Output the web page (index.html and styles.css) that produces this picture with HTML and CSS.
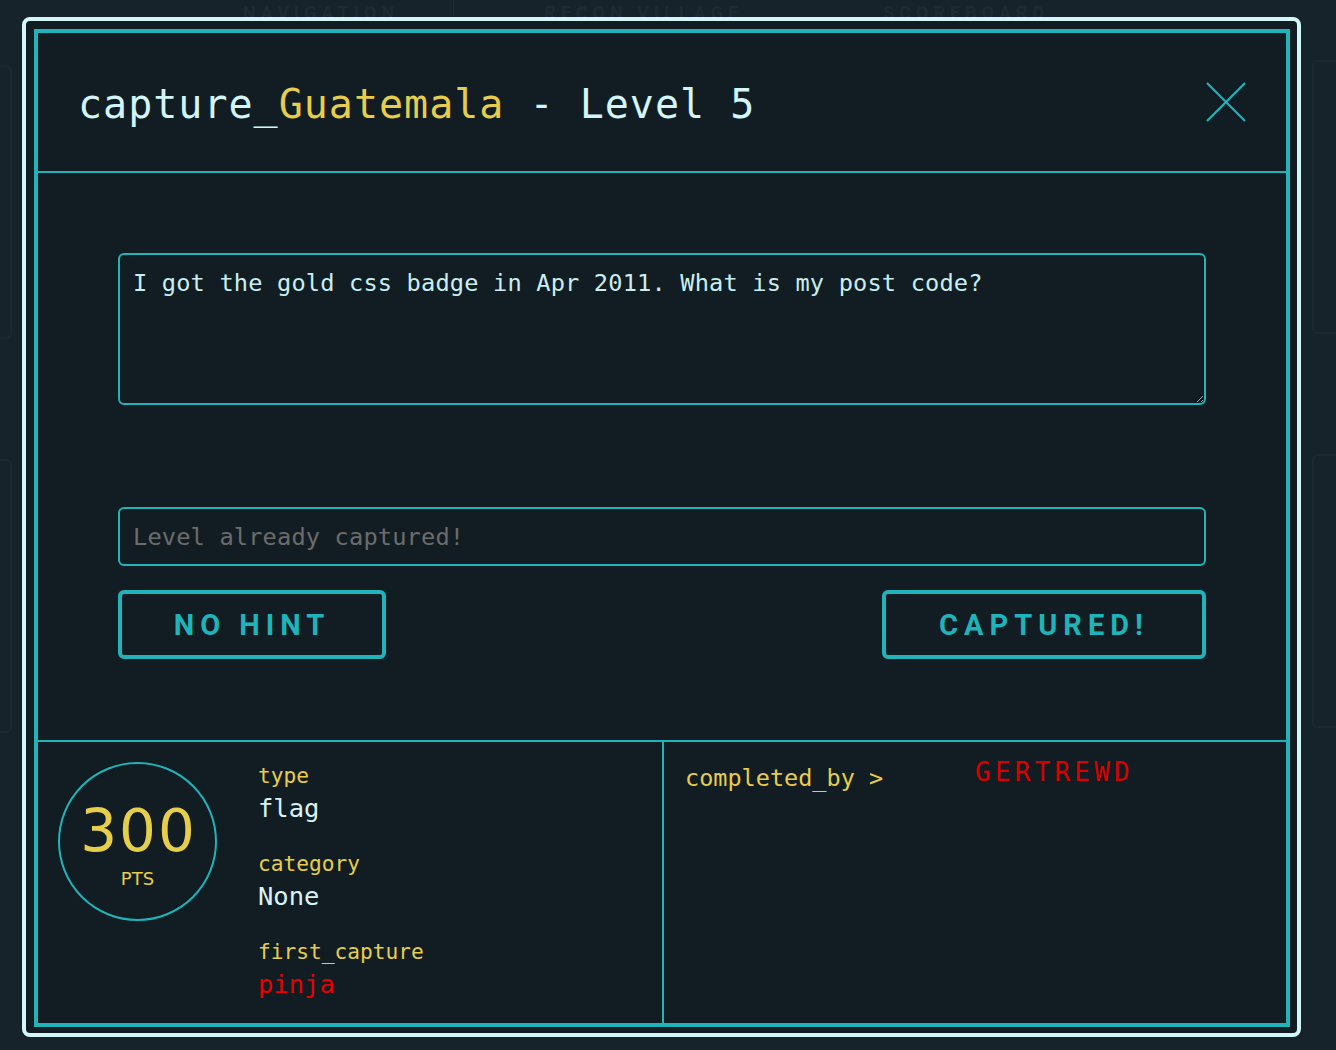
FILE: index.html
```html
<!DOCTYPE html>
<html lang="en">
<head>
<meta charset="utf-8">
<title>capture_Guatemala - Level 5</title>
<link rel="stylesheet" href="styles.css">
</head>
<body>
  <div class="backdrop">
    <nav class="topnav">
      <span class="nav-item">NAVIGATION</span>
      <span class="nav-sep"></span>
      <span class="nav-item">RECON VILLAGE</span>
      <span class="nav-item">SCOREBOARD</span>
    </nav>
    <div class="page">
      <aside class="side side-left">
        <div class="ghost ghost-a"></div>
        <div class="ghost ghost-b"></div>
      </aside>
      <main class="page-main"></main>
      <aside class="side side-right">
        <div class="ghost ghost-c"></div>
        <div class="ghost ghost-d"></div>
      </aside>
    </div>
  </div>

  <div class="modal">
    <div class="modal-inner">
      <header class="modal-header">
        <h1 class="modal-title">capture_<span class="hl">Guatemala</span> - Level 5</h1>
        <button class="close" aria-label="Close">
          <svg width="40" height="40" viewBox="0 0 40 40"><path d="M1 1 L39 39 M39 1 L1 39" stroke="#1fb3ba" stroke-width="2.2" fill="none"/></svg>
        </button>
      </header>
      <section class="modal-body">
        <textarea class="question" readonly>I got the gold css badge in Apr 2011. What is my post code?</textarea>
        <input class="answer" type="text" placeholder="Level already captured!" disabled>
        <div class="actions">
          <button class="btn">NO HINT</button>
          <button class="btn">CAPTURED!</button>
        </div>
      </section>
      <footer class="modal-footer">
        <div class="stats">
          <div class="points">
            <div class="points-num">300</div>
            <div class="points-unit">PTS</div>
          </div>
          <dl class="info">
            <dt>type</dt>
            <dd>flag</dd>
            <dt>category</dt>
            <dd>None</dd>
            <dt>first_capture</dt>
            <dd class="red">pinja</dd>
          </dl>
        </div>
        <div class="completed">
          <span class="completed-label">completed_by &gt;</span>
          <span class="completed-user">GERTREWD</span>
        </div>
      </footer>
    </div>
  </div>
</body>
</html>
```

FILE: styles.css
```css
html, body {
  margin: 0;
  padding: 0;
}
body {
  width: 1336px;
  height: 1050px;
  overflow: hidden;
  background: #16232b;
  position: relative;
  font-family: "DejaVu Sans Mono", monospace;
}

/* ---------- faint page behind the modal ---------- */
.backdrop {
  height: 1050px;
  display: flex;
  flex-direction: column;
}
.topnav {
  height: 40px;
  display: flex;
  align-items: flex-start;
  padding-left: 243px;
  box-sizing: border-box;
}
.nav-item {
  font-family: "Roboto", "Liberation Sans", sans-serif;
  font-weight: bold;
  font-size: 18px;
  letter-spacing: 5px;
  color: #1c2b34;
  line-height: 24px;
  padding-top: 1px;
}
.nav-sep {
  width: 1px;
  height: 18px;
  background: #1c2b34;
  margin: 0 90px 0 54px;
}
.nav-item:last-child {
  margin-left: 140px;
}
.page {
  flex: 1;
  display: flex;
}
.side {
  width: 12px;
  display: flex;
  flex-direction: column;
  gap: 120px;
}
.side-left {
  padding-top: 25px;
}
.side-right {
  width: 24px;
  padding-top: 20px;
}
.page-main {
  flex: 1;
}
.ghost {
  border: 2px solid #1b2a32;
  border-radius: 6px;
}
.ghost-a, .ghost-b {
  margin-left: -20px;
  height: 270px;
}
.ghost-c, .ghost-d {
  margin-right: -20px;
  height: 270px;
}

/* ---------- modal ---------- */
.modal {
  position: absolute;
  left: 22px;
  top: 17px;
  width: 1279px;
  height: 1020px;
  box-sizing: border-box;
  border: 4px solid #d3f7f9;
  border-radius: 8px;
  background: #121d23;
  padding: 8px 7px 6px 8px;
}
.modal-inner {
  width: 1256px;
  height: 998px;
  box-sizing: border-box;
  border: 4px solid #1fb3ba;
  display: flex;
  flex-direction: column;
}
.modal-header {
  flex: 0 0 140px;
  height: 140px;
  box-sizing: border-box;
  border-bottom: 2px solid #1fb3ba;
  padding: 4px 40px 0 40px;
  display: flex;
  align-items: center;
  justify-content: space-between;
}
.modal-title {
  margin: 0;
  font-family: "DejaVu Sans Mono", monospace;
  font-weight: normal;
  font-size: 40px;
  line-height: 48px;
  letter-spacing: 1px;
  color: #d3f5f7;
}
.hl {
  color: #e6ce4b;
}
.close {
  width: 40px;
  height: 40px;
  padding: 0;
  margin-top: -4px;
  border: 0;
  background: none;
  display: block;
}
.close svg {
  display: block;
}

.modal-body {
  flex: 0 0 569px;
  height: 569px;
  box-sizing: border-box;
  border-bottom: 2px solid #1fb3ba;
  padding: 80px 80px 0;
  display: flex;
  flex-direction: column;
}
.question {
  flex: 0 0 152px;
  height: 152px;
  box-sizing: border-box;
  border: 2px solid #1fb3ba;
  border-radius: 6px;
  background: #121d23;
  color: #c9eef0;
  font-family: "DejaVu Sans Mono", monospace;
  font-size: 23.7px;
  line-height: 28px;
  letter-spacing: 0.14px;
  padding: 14px 13px;
  margin: 0;
  resize: vertical;
  outline: none;
  color-scheme: dark;
}
.answer {
  flex: 0 0 59px;
  margin-top: 102px;
  height: 59px;
  box-sizing: border-box;
  border: 2px solid #1fb3ba;
  border-radius: 6px;
  background: #121d23;
  font-family: "DejaVu Sans Mono", monospace;
  font-size: 23.7px;
  letter-spacing: 0.14px;
  padding: 0 13px;
  outline: none;
}
.answer::placeholder {
  color: #6c6c6c;
  opacity: 1;
}
.actions {
  flex: 0 0 69px;
  margin-top: 24px;
  display: flex;
  justify-content: space-between;
}
.btn {
  height: 69px;
  box-sizing: border-box;
  border: 4px solid #1fb3ba;
  border-radius: 6px;
  background: #121d23;
  color: #1fb3ba;
  font-family: "Roboto", "Liberation Sans", sans-serif;
  font-weight: bold;
  font-size: 29px;
  letter-spacing: 6px;
  padding: 0;
}
.btn:first-child {
  width: 268px;
}
.btn:last-child {
  width: 324px;
}

.modal-footer {
  flex: 1 1 auto;
  min-height: 0;
  overflow: hidden;
  display: flex;
}
.stats {
  width: 626px;
  box-sizing: border-box;
  border-right: 2px solid #1fb3ba;
  padding: 20px 0 0 20px;
  display: flex;
  align-items: flex-start;
}
.points {
  flex: 0 0 159px;
  width: 159px;
  height: 159px;
  box-sizing: border-box;
  border: 2px solid #1fb3ba;
  border-radius: 50%;
  padding-top: 8px;
  display: flex;
  flex-direction: column;
  align-items: center;
  justify-content: center;
  color: #e6ce4b;
}
.points-num {
  font-family: "DejaVu Sans", sans-serif;
  font-size: 58px;
  line-height: 57px;
  letter-spacing: 2px;
  padding-left: 2px;
}
.points-unit {
  font-family: "DejaVu Sans", sans-serif;
  font-size: 18px;
  line-height: 18px;
  margin-top: 10px;
}
.info {
  margin: -1px 0 0 41px;
}
.info dt {
  font-size: 21.2px;
  line-height: 30px;
  color: #e6ce4b;
}
.info dd {
  margin: 0 0 24px;
  font-size: 25.5px;
  line-height: 34px;
  color: #d8f3f5;
}
.info dd.red {
  color: #e60000;
  margin-bottom: 0;
}

.completed {
  flex: 1;
  padding: 15px 0 0 21px;
  display: flex;
  align-items: flex-start;
}
.completed-label {
  margin-top: 7px;
  font-size: 23.5px;
  line-height: 28px;
  color: #e6ce4b;
}
.completed-user {
  margin-left: 92px;
  font-size: 26px;
  line-height: 30px;
  letter-spacing: 4.2px;
  color: #d80000;
}
```
